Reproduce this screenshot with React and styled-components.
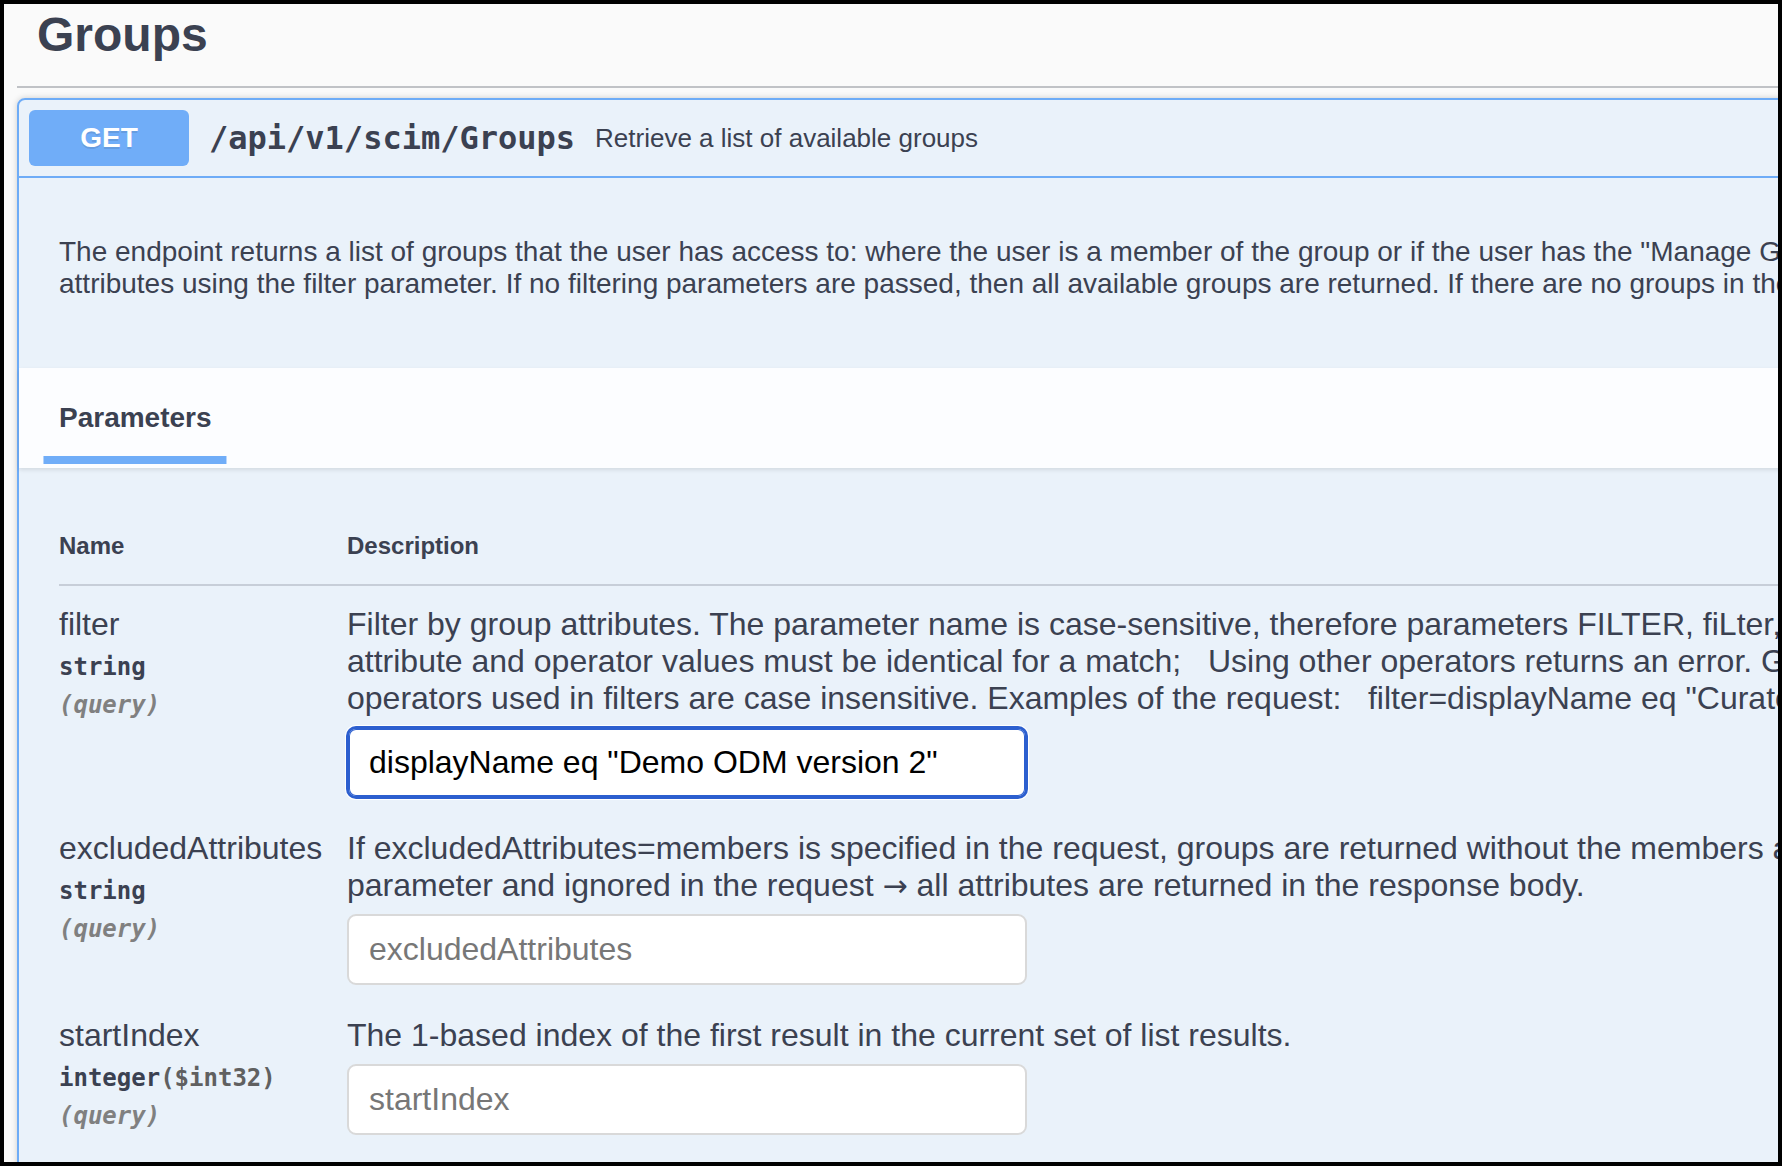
import React from "react";
import styled, { createGlobalStyle } from "styled-components";

const GlobalStyle = createGlobalStyle`
  html, body {
    margin: 0;
    padding: 0;
    background: #000;
  }
  * {
    box-sizing: border-box;
  }
`;

const Frame = styled.div`
  width: 1782px;
  height: 1166px;
  border: 4px solid #000;
  background: #fafafa;
  overflow: hidden;
  font-family: "Liberation Sans", Arial, sans-serif;
  color: #3b4151;
`;

const Page = styled.div`
  width: 2400px;
  padding-left: 13px;
`;

const TagHeading = styled.h3`
  margin: 0 0 10px;
  padding: 3px 40px 23px 20px;
  font-size: 48px;
  line-height: 56px;
  font-weight: 700;
  border-bottom: 2px solid rgba(59, 65, 81, 0.3);
`;

const OpBlock = styled.div`
  border: 2px solid #6eacf7;
  border-radius: 8px;
  background: rgba(97, 175, 254, 0.1);
  box-shadow: 0 0 6px rgba(0, 0, 0, 0.19);
`;

const Summary = styled.div`
  display: flex;
  align-items: center;
  padding: 10px;
  border-bottom: 2px solid #6eacf7;
`;

const Method = styled.span`
  min-width: 160px;
  padding: 12px 0;
  border-radius: 6px;
  background: #70adf8;
  color: #fff;
  font-size: 28px;
  line-height: 32px;
  font-weight: 700;
  text-align: center;
  text-shadow: 0 2px 0 rgba(0, 0, 0, 0.1);
`;

const Path = styled.span`
  padding: 0 20px;
  font-family: "DejaVu Sans Mono", monospace;
  font-size: 32px;
  font-weight: 700;
  color: #3b4151;
`;

const SummaryText = styled.span`
  font-size: 26px;
  color: #3b4151;
`;

const DescriptionWrap = styled.div`
  padding: 30px 40px;
  margin-bottom: 10px;
`;

const Lines = styled.p`
  margin: ${(p) => p.$margin || "0"};
  font-size: ${(p) => p.$size || 28}px;
  line-height: ${(p) => p.$line || 32}px;
  white-space: pre;
`;

const SectionHeader = styled.div`
  display: flex;
  align-items: center;
  min-height: 100px;
  padding: 16px 40px;
  background: rgba(255, 255, 255, 0.85);
  box-shadow: 0 2px 4px rgba(0, 0, 0, 0.1);
`;

const TabTitle = styled.h4`
  margin: 0;
  font-size: 28px;
  line-height: 32px;
  font-weight: 700;

  span {
    position: relative;
    display: inline-block;
  }

  span::after {
    content: "";
    position: absolute;
    left: 50%;
    bottom: -30px;
    width: 120%;
    height: 8px;
    background: #70adf8;
    transform: translateX(-50%);
  }
`;

const TableWrap = styled.div`
  padding: 40px;
`;

const ParamGrid = styled.div`
  display: grid;
  grid-template-columns: 288px 1fr;
`;

const HeadCell = styled.div`
  padding: 24px 0;
  font-size: 24px;
  line-height: 28px;
  font-weight: 700;
  border-bottom: 2px solid rgba(59, 65, 81, 0.2);
`;

const NameCell = styled.div`
  padding: 20px 0;
`;

const DescCell = styled.div`
  padding: 20px 0 2px;
`;

const ParamName = styled.div`
  font-size: 32px;
  line-height: 37px;
`;

const ParamType = styled.div`
  padding: 10px 0;
  font-family: "DejaVu Sans Mono", monospace;
  font-size: 24px;
  line-height: 28px;
  font-weight: 700;
  color: #3b4151;
`;

const Format = styled.span`
  color: #606060;
`;

const ParamIn = styled.div`
  font-family: "DejaVu Sans Mono", monospace;
  font-size: 24px;
  line-height: 28px;
  font-style: italic;
  font-weight: 700;
  color: #808080;
`;

const Arrow = styled.span`
  font-family: "DejaVu Sans", sans-serif;
  font-size: 30px;
`;

const ParamInput = styled.input`
  display: block;
  width: 680px;
  margin: 10px 0;
  padding: 16px 20px;
  border: 2px solid ${(p) => (p.$focused ? "#2c5fcf" : "#d9d9d9")};
  border-radius: 9px;
  background: #fff;
  font-family: "Liberation Sans", Arial, sans-serif;
  font-size: 32px;
  line-height: 35px;
  color: #000;
  outline: none;
  box-shadow: ${(p) =>
    p.$focused
      ? "inset 0 0 0 1px #2c5fcf, 0 0 0 1px #2c5fcf, 0 0 0 2px #fff"
      : "none"};

  &::placeholder {
    color: #777;
  }
`;

const params = [
  {
    name: "filter",
    type: "string",
    lines: [
      "Filter by group attributes. The parameter name is case-sensitive, therefore parameters FILTER, fiLter, Filter are ignored. The",
      "attribute and operator values must be identical for a match;   Using other operators returns an error. Group attributes and",
      'operators used in filters are case insensitive. Examples of the request:   filter=displayName eq "Curators"',
    ],
    value: 'displayName eq "Demo ODM version 2"',
  },
  {
    name: "excludedAttributes",
    type: "string",
    lines: [
      "If excludedAttributes=members is specified in the request, groups are returned without the members attribute. Other values are not supported by the",
      <>
        parameter and ignored in the request <Arrow>{"\u2192"}</Arrow> all
        attributes are returned in the response body.
      </>,
    ],
  },
  {
    name: "startIndex",
    type: "integer",
    format: "($int32)",
    lines: ["The 1-based index of the first result in the current set of list results."],
  },
];

const App = () => {
  return (
    <>
      <GlobalStyle />
      <Frame>
        <Page>
          <TagHeading>Groups</TagHeading>
          <OpBlock>
            <Summary>
              <Method>GET</Method>
              <Path>/api/v1/scim/Groups</Path>
              <SummaryText>Retrieve a list of available groups</SummaryText>
            </Summary>

            <DescriptionWrap>
              <Lines $margin="28px 0">
                {
                  'The endpoint returns a list of groups that the user has access to: where the user is a member of the group or if the user has the "Manage Groups" permission. Groups can be filtered by'
                }
                <br />
                {
                  "attributes using the filter parameter. If no filtering parameters are passed, then all available groups are returned. If there are no groups in the system, an empty list is returned."
                }
              </Lines>
            </DescriptionWrap>

            <SectionHeader>
              <TabTitle>
                <span>Parameters</span>
              </TabTitle>
            </SectionHeader>

            <TableWrap>
              <ParamGrid>
                <HeadCell>Name</HeadCell>
                <HeadCell>Description</HeadCell>
                {params.map((p) => (
                  <React.Fragment key={p.name}>
                    <NameCell>
                      <ParamName>{p.name}</ParamName>
                      <ParamType>
                        {p.type}
                        {p.format && <Format>{p.format}</Format>}
                      </ParamType>
                      <ParamIn>(query)</ParamIn>
                    </NameCell>
                    <DescCell>
                      <Lines $size={32} $line={37}>
                        {p.lines.map((l, i) => (
                          <React.Fragment key={i}>
                            {i > 0 && <br />}
                            {l}
                          </React.Fragment>
                        ))}
                      </Lines>
                      <ParamInput
                        type="text"
                        placeholder={p.name}
                        defaultValue={p.value}
                        $focused={!!p.value}
                      />
                    </DescCell>
                  </React.Fragment>
                ))}
              </ParamGrid>
            </TableWrap>
          </OpBlock>
        </Page>
      </Frame>
    </>
  );
};

export default App;
